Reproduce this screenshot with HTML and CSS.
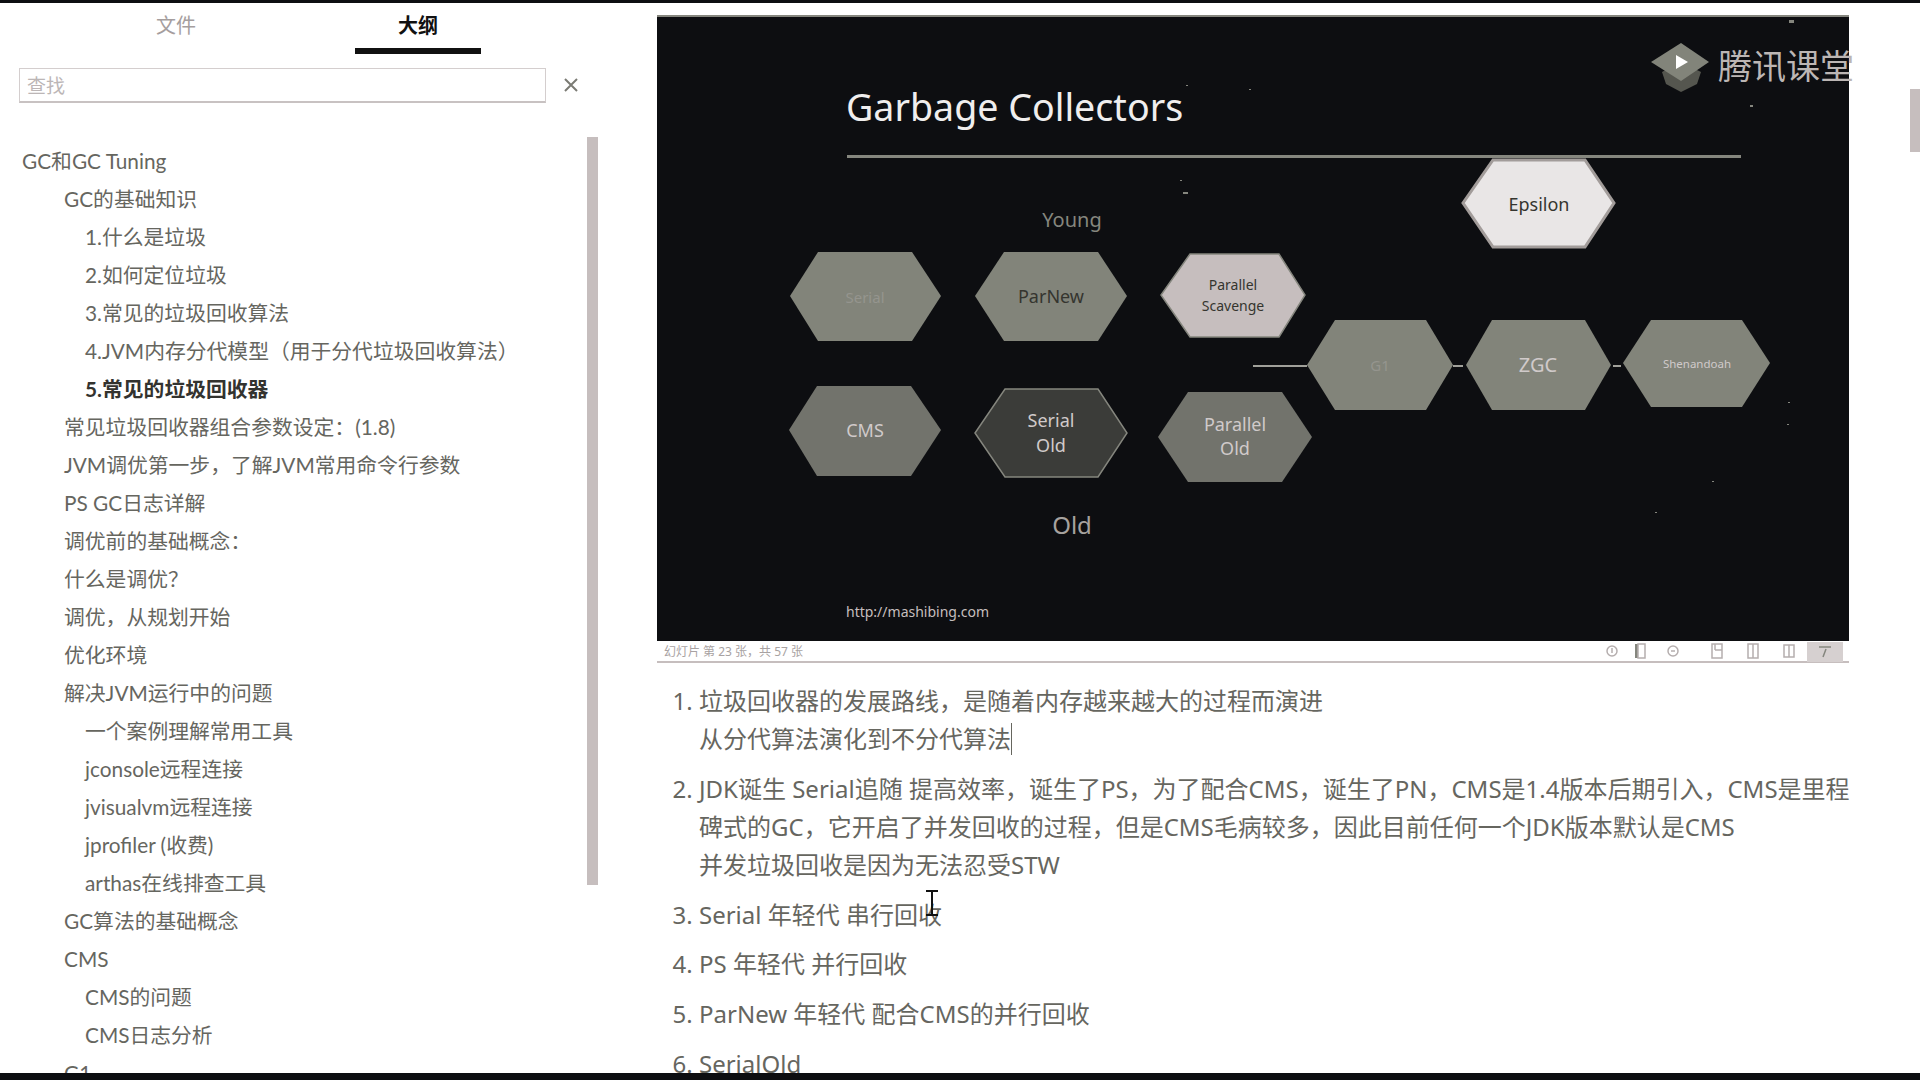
FILE: index.html
```html
<!DOCTYPE html>
<html lang="zh-CN">
<head>
  <meta charset="UTF-8" />
  <title>GC和GC Tuning</title>
  <link rel="stylesheet" href="styles.css">
</head>
<body>
  <div class="page">
    <aside class="sidebar">
      <div class="tabs">
        <div class="tab">文件</div>
        <div class="tab active">大纲</div>
      </div>
      <div class="search">
        <div class="search-box">查找</div>
        <svg class="search-close" width="16" height="16" viewBox="0 0 16 16"><path d="M2 2L14 14M14 2L2 14"/></svg>
      </div>
      <div class="outline">
        <div class="scroll-thumb"></div>
        <div class="row">GC和GC Tuning</div>
        <div class="row l1">GC的基础知识</div>
        <div class="row l2">1.什么是垃圾</div>
        <div class="row l2">2.如何定位垃圾</div>
        <div class="row l2">3.常见的垃圾回收算法</div>
        <div class="row l2">4.JVM内存分代模型（用于分代垃圾回收算法）</div>
        <div class="row l2 current">5.常见的垃圾回收器</div>
        <div class="row l1">常见垃圾回收器组合参数设定：(1.8)</div>
        <div class="row l1">JVM调优第一步，了解JVM常用命令行参数</div>
        <div class="row l1">PS GC日志详解</div>
        <div class="row l1">调优前的基础概念：</div>
        <div class="row l1">什么是调优？</div>
        <div class="row l1">调优，从规划开始</div>
        <div class="row l1">优化环境</div>
        <div class="row l1">解决JVM运行中的问题</div>
        <div class="row l2">一个案例理解常用工具</div>
        <div class="row l2">jconsole远程连接</div>
        <div class="row l2">jvisualvm远程连接</div>
        <div class="row l2">jprofiler (收费)</div>
        <div class="row l2">arthas在线排查工具</div>
        <div class="row l1">GC算法的基础概念</div>
        <div class="row l1">CMS</div>
        <div class="row l2">CMS的问题</div>
        <div class="row l2">CMS日志分析</div>
        <div class="row l1">G1</div>
      </div>
    </aside>

    <main class="main">
      <div class="slide">
        <svg class="slide-art" width="1192" height="626" viewBox="657 15 1192 626">
          <rect class="slide-bg" x="657" y="15" width="1192" height="626"/>
          <rect class="slide-edge" x="657" y="15" width="1192" height="2"/>

          <text class="title" x="846" y="121">Garbage Collectors</text>
          <rect class="rule" x="847" y="155" width="894" height="3"/>

          <!-- logo -->
          <polygon class="logo-low" points="1662,72 1681,62 1701,72 1697,84 1681,92 1666,84"/>
          <polygon class="hex-gray" points="1651,62 1681,43 1709,62 1681,81"/>
          <polygon class="logo-play" points="1676,55 1688,62 1676,69"/>
          <text class="logo-text" x="1718" y="79">腾讯课堂</text>

          <text class="group young" x="1072" y="227">Young</text>
          <text class="group old" x="1072" y="534">Old</text>
          <text class="url" x="846" y="617">http://mashibing.com</text>

          <rect class="link" x="1253" y="365" width="54" height="2"/>
          <rect class="link" x="1453" y="365" width="10" height="2"/>
          <rect class="link" x="1613" y="365" width="8" height="2"/>

          <!-- young -->
          <polygon class="hex-gray" points="818,252 912,252 941,296 912,341 818,341 790,296"/>
          <text class="label faint" x="865" y="303">Serial</text>
          <polygon class="hex-gray" points="1004,252 1098,252 1127,296 1098,341 1004,341 975,296"/>
          <text class="label dark" x="1051" y="303">ParNew</text>
          <polygon class="hex-pink" points="1190,254 1279,254 1305,295 1279,337 1190,337 1161,295"/>
          <text class="label dark small" x="1233" y="290">Parallel</text>
          <text class="label dark small" x="1233" y="311">Scavenge</text>

          <!-- epsilon -->
          <polygon class="hex-light" points="1493,160 1585,160 1614,203 1585,247 1493,247 1463,203"/>
          <text class="label dark" x="1539" y="211">Epsilon</text>

          <!-- concurrent -->
          <polygon class="hex-gray" points="1335,320 1426,320 1453,365 1426,410 1335,410 1307,365"/>
          <text class="label faint" x="1380" y="371">G1</text>
          <polygon class="hex-gray" points="1492,320 1585,320 1611,365 1585,410 1492,410 1466,365"/>
          <text class="label pale big" x="1538" y="372">ZGC</text>
          <polygon class="hex-gray" points="1651,320 1742,320 1770,363 1742,407 1651,407 1623,363"/>
          <text class="label pale tiny" x="1697" y="368">Shenandoah</text>

          <!-- old -->
          <polygon class="hex-dim" points="817,386 911,386 941,430 911,476 817,476 789,430"/>
          <text class="label pale" x="865" y="437">CMS</text>
          <polygon class="hex-dark" points="1005,389 1098,389 1127,433 1098,477 1005,477 975,433"/>
          <text class="label pale" x="1051" y="427">Serial</text>
          <text class="label pale" x="1051" y="452">Old</text>
          <polygon class="hex-dim" points="1188,392 1282,392 1312,437 1282,482 1188,482 1158,437"/>
          <text class="label pale" x="1235" y="431">Parallel</text>
          <text class="label pale" x="1235" y="455">Old</text>

          <!-- specks from the recording -->
          <g class="specks">
            <rect x="1750" y="105" width="3" height="2"/>
            <rect x="1789" y="20" width="5" height="3"/>
            <rect x="1186" y="85" width="2" height="1"/>
            <rect x="1249" y="89" width="2" height="1"/>
            <rect x="1183" y="192" width="5" height="2"/>
            <rect x="1180" y="180" width="2" height="1"/>
            <rect x="1788" y="402" width="2" height="1"/>
            <rect x="1787" y="424" width="2" height="1"/>
            <rect x="1655" y="512" width="2" height="1"/>
            <rect x="1712" y="481" width="2" height="1"/>
          </g>
        </svg>
        <div class="status">
          <span class="status-text">幻灯片 第 23 张，共 57 张</span>
          <svg class="status-icons" width="248" height="21" viewBox="0 0 248 21">
            <circle cx="11" cy="10" r="5"/>
            <path d="M11 7V12"/>
            <rect class="solid" x="34" y="3" width="3" height="14"/>
            <rect x="37" y="3" width="7" height="14"/>
            <circle cx="72" cy="10" r="5"/>
            <path d="M70 10H74"/>
            <rect x="111" y="3" width="10" height="14"/>
            <path d="M114 9H121M114 3V9"/>
            <rect x="147" y="3" width="10" height="14"/>
            <path d="M152 3V17"/>
            <rect x="183" y="4" width="10" height="12"/>
            <path d="M188 4V16"/>
            <rect class="active-view" x="206" y="1" width="36" height="20"/>
            <path class="active-mark" d="M218 6H230M225 8L222 16"/>
          </svg>
        </div>
      </div>

      <ol class="notes">
        <li>垃圾回收器的发展路线，是随着内存越来越大的过程而演进<br>从分代算法演化到不分代算法<span class="caret"></span></li>
        <li>JDK诞生 Serial追随 提高效率，诞生了PS，为了配合CMS，诞生了PN，CMS是1.4版本后期引入，CMS是里程<br>碑式的GC，它开启了并发回收的过程，但是CMS毛病较多，因此目前任何一个JDK版本默认是CMS<br>并发垃圾回收是因为无法忍受STW</li>
        <li>Serial 年轻代 串行回收<svg class="ibeam" width="14" height="26" viewBox="0 0 14 26"><path d="M1 1H13M7 1V25M1 25H13"/></svg></li>
        <li>PS 年轻代 并行回收</li>
        <li>ParNew 年轻代 配合CMS的并行回收</li>
        <li>SerialOld</li>
      </ol>
      <div class="page-thumb"></div>
    </main>
  </div>
</body>
</html>
```

FILE: styles.css
```css
* {
  margin: 0;
  padding: 0;
  box-sizing: border-box;
}

html, body {
  height: 100%;
  overflow: hidden;
}

body {
  background: #0d0e11;
  padding: 3px 0 7px;
  font-family: "Noto Sans", "Noto Sans CJK SC", sans-serif;
  color: #66665f;
}

.page {
  display: flex;
  height: 1070px;
  background: #fff;
  overflow: hidden;
  position: relative;
}

/* sidebar */
.sidebar {
  width: 657px;
  flex-shrink: 0;
}

.tabs {
  display: flex;
  height: 51px;
  padding-left: 113px;
  gap: 116px;
}

.tab {
  width: 126px;
  height: 51px;
  padding-top: 8px;
  text-align: center;
  font-size: 20px;
  line-height: 30px;
  color: #a59e9e;
}

.tab.active {
  color: #111;
  font-weight: 700;
  border-bottom: 6px solid #111;
}

.search {
  display: flex;
  align-items: center;
  margin-top: 14px;
  padding-left: 19px;
}

.search-box {
  width: 527px;
  height: 35px;
  padding-left: 7px;
  border: 1px solid #d4cece;
  border-bottom: 2px solid #c8c2c2;
  font-size: 19px;
  line-height: 34px;
  color: #bcb6b6;
}

.search-close {
  margin-left: 17px;
  margin-top: -2px;
}

.search-close path {
  stroke: #7b7b74;
  stroke-width: 2;
  fill: none;
}

.outline {
  position: relative;
  margin-top: 34px;
  padding-top: 5px;
}

.scroll-thumb {
  position: absolute;
  left: 587px;
  top: 0;
  width: 11px;
  height: 748px;
  background: #c6bebe;
}

.row {
  height: 38px;
  padding-left: 22px;
  font-family: Lato, "Noto Sans CJK SC", sans-serif;
  font-size: 20.8px;
  line-height: 38px;
  white-space: nowrap;
}

.row.l1 {
  padding-left: 64px;
}

.row.l2 {
  padding-left: 85px;
}

.row.current {
  font-weight: 700;
  color: #33332f;
}

/* main column */
.main {
  flex: 1;
  min-width: 0;
  padding-top: 12px;
}

.slide {
  width: 1192px;
}

.slide-art {
  display: block;
  overflow: visible;
}

.slide-bg { fill: #0d0e11; }
.slide-edge { fill: #85867e; }
.rule { fill: #85867e; }
.link { fill: #a0a09a; }
.specks rect { fill: #85867e; }

.hex-gray { fill: #82847a; }
.hex-dim { fill: #72736c; }
.hex-dark { fill: #3b3c39; stroke: #85867e; stroke-width: 1.5; }
.hex-pink { fill: #c6bebe; stroke: #85867e; stroke-width: 1.5; }
.hex-light { fill: #e9e6e6; stroke: #a29c9a; stroke-width: 3; }

.logo-low { fill: #55564f; }
.logo-play { fill: #fff; }

.slide-art text {
  font-family: "Noto Sans", "Noto Sans CJK SC", sans-serif;
}

.slide-art .title {
  font-size: 37.6px;
  fill: #f0eeee;
}

.slide-art .logo-text {
  font-size: 34px;
  fill: #bcb6b4;
}

.slide-art .group {
  text-anchor: middle;
}

.slide-art .young {
  font-size: 20px;
  fill: #85867e;
}

.slide-art .old {
  font-size: 24px;
  fill: #a6a29f;
}

.slide-art .url {
  font-size: 14px;
  fill: #c6bebe;
}

.slide-art .label {
  text-anchor: middle;
  font-size: 18px;
}

.slide-art .dark { fill: #35352f; }
.slide-art .faint { fill: #95958e; font-size: 15px; }
.slide-art .pale { fill: #d0caca; }
.slide-art .big { font-size: 20px; }
.slide-art .small { font-size: 14px; }
.slide-art .tiny { font-size: 11.5px; }

.status {
  display: flex;
  align-items: center;
  height: 22px;
  padding-left: 7px;
  border-bottom: 2px solid #c6bebe;
  font-size: 12px;
  color: #a8a2a2;
}

.status-icons {
  margin-left: auto;
  margin-top: 1px;
  flex-shrink: 0;
}

.status-icons * {
  fill: none;
  stroke: #b5aeae;
  stroke-width: 1.5;
}

.status-icons .solid {
  fill: #85867e;
  stroke: none;
}

.status-icons .active-view {
  fill: #d6d0d0;
  stroke: none;
}

.status-icons .active-mark {
  stroke: #85867e;
}

/* notes */
.notes {
  margin-top: 19px;
  padding-left: 42px;
  font-size: 24px;
  line-height: 38px;
  white-space: nowrap;
}

.notes li {
  position: relative;
  margin-bottom: 11.8px;
}

.caret {
  display: inline-block;
  width: 1px;
  height: 32px;
  background: #66665f;
  vertical-align: -7px;
}

.ibeam {
  position: absolute;
  left: 226px;
  top: -6px;
}

.ibeam path {
  stroke: #111;
  stroke-width: 2;
  fill: none;
}

.page-thumb {
  position: absolute;
  right: 0;
  top: 86px;
  width: 10px;
  height: 63px;
  background: #c6bebe;
}
```
